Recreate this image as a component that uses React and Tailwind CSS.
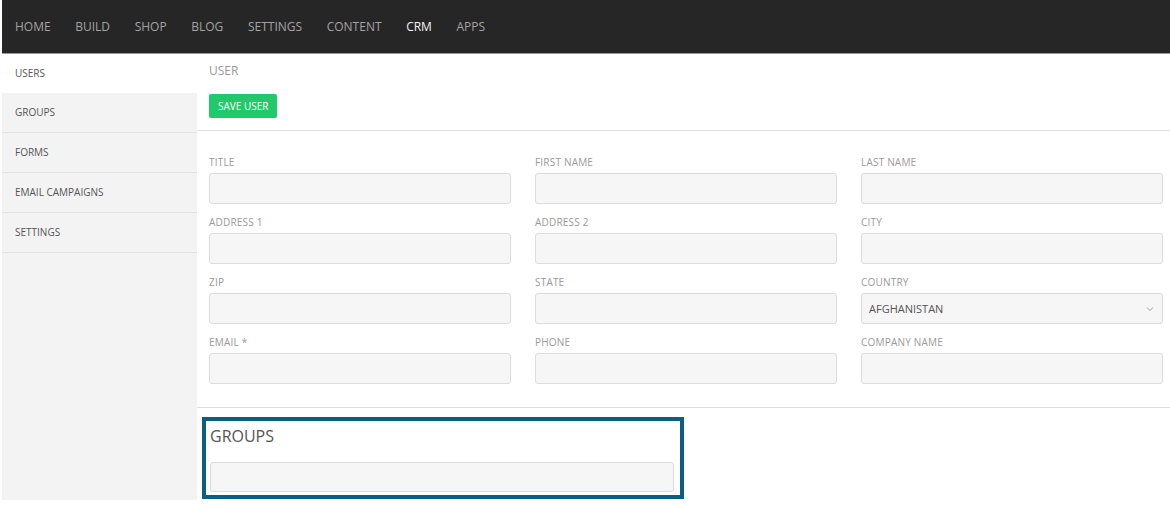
import React from "react";

const navItems = ["HOME", "BUILD", "SHOP", "BLOG", "SETTINGS", "CONTENT", "CRM", "APPS"];
const sideItems = ["GROUPS", "FORMS", "EMAIL CAMPAIGNS", "SETTINGS"];

const rows = [
  ["TITLE", "FIRST NAME", "LAST NAME"],
  ["ADDRESS 1", "ADDRESS 2", "CITY"],
  ["ZIP", "STATE", "COUNTRY"],
  ["EMAIL *", "PHONE", "COMPANY NAME"],
];

function Field({ label }) {
  return (
    <div className="flex flex-col">
      <div className="h-[20px] flex items-center text-[10px] tracking-[0.2px] text-[#9a9a9a] leading-none">{label}</div>
      {label === "COUNTRY" ? (
        <div className="h-[31px] mt-[1px] rounded-[3px] border border-[#dcdcdc] bg-[#f6f6f6] flex items-center justify-between pl-[7px] pr-[8px]">
          <span className="text-[11px] text-[#555] leading-none">AFGHANISTAN</span>
          <svg width="8" height="6" viewBox="0 0 8 6" fill="none">
            <path d="M1 1.5 L4 4.5 L7 1.5" stroke="#999" strokeWidth="1" />
          </svg>
        </div>
      ) : (
        <div className="h-[31px] mt-[1px] rounded-[3px] border border-[#dcdcdc] bg-[#f6f6f6]" />
      )}
    </div>
  );
}

export default function App() {
  return (
    <div className="w-[1170px] h-[516px] bg-white pl-[2px] overflow-hidden" style={{ fontFamily: '"Open Sans", "Noto Sans", sans-serif' }}>
      <div className="h-[54px] bg-[#262626] border-b border-[#9a9a9a] flex items-center pl-[13px] gap-[24.6px]">
        {navItems.map((n) => (
          <span key={n} className={`text-[12px] leading-none ${n === "CRM" ? "text-[#f2f2f2]" : "text-[#a3a3a3]"}`}>{n}</span>
        ))}
      </div>
      <div className="flex h-[446px]">
        <div className="w-[195px] bg-[#f3f3f3] flex flex-col">
          <div className="h-[39px] bg-white flex items-center pl-[13px] text-[10px] text-[#555]">USERS</div>
          {sideItems.map((s) => (
            <div key={s} className="h-[40px] border-b border-[#e2e2e2] flex items-center pl-[13px] text-[10px] text-[#555]">{s}</div>
          ))}
        </div>
        <div className="flex-1 flex flex-col">
          <div className="pl-[12px] pt-[11px] pb-[12px] border-b border-[#dedede]">
            <div className="text-[12px] text-[#9a9a9a] leading-none h-[14px]">USER</div>
            <button className="mt-[15px] h-[24px] px-[9px] rounded-[2px] bg-[#22c96b] text-white text-[10px] leading-none">SAVE USER</button>
          </div>
          <div className="pl-[12px] pr-[7px] pt-[21px] pb-[23px] border-b border-[#dedede] flex flex-col gap-[8px]">
            {rows.map((r, i) => (
              <div key={i} className="grid grid-cols-3 gap-[24px]">
                {r.map((l) => (
                  <Field key={l} label={l} />
                ))}
              </div>
            ))}
          </div>
          <div className="pl-[5px] pt-[9px]">
            <div className="w-[482px] h-[82px] border-[4px] border-[#0b5e80] pl-[4px] pr-[6px] pt-[7px]">
              <div className="text-[16px] text-[#555] leading-none h-[20px]">GROUPS</div>
              <div className="mt-[14px] h-[30px] rounded-[3px] border border-[#dcdcdc] bg-[#f6f6f6]" />
            </div>
          </div>
        </div>
      </div>
    </div>
  );
}
